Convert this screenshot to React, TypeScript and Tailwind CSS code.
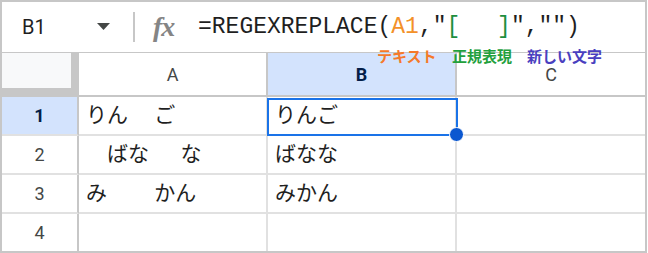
const cellFont = "font-['Roboto','Noto_Sans_CJK_JP',sans-serif]";

const rows = [
  { n: "1", a: "りん　 ご", b: "りんご" },
  { n: "2", a: "　ばな　  な", b: "ばなな" },
  { n: "3", a: "み　　 かん", b: "みかん" },
  { n: "4", a: "", b: "" },
];

function FxIcon() {
  return (
    <span className="w-[28px] text-[28px] leading-none italic font-bold text-[#858585] font-['Liberation_Serif',serif] tracking-[-1px]">
      fx
    </span>
  );
}

export default function App() {
  return (
    <div className="w-[648px] h-[253px] bg-white font-['Roboto',sans-serif]">
      <div className="relative w-[647px] h-[253px] border-2 border-[#c7c7c7] overflow-hidden">
        {/* formula bar */}
        <div className="flex items-center h-[51px] border-b border-[#c7c7c7]">
          <span className="ml-[20px] w-[75px] text-[20px] text-[#1f1f1f]">B1</span>
          <svg width="13" height="7" viewBox="0 0 13 7" className="mt-[-2px]">
            <polygon points="0,0 13,0 6.5,7" fill="#444746" />
          </svg>
          <div className="ml-[23px] w-[2px] h-[30px] bg-[#c7c7c7]" />
          <div className="ml-[18px] flex items-center">
            <FxIcon />
          </div>
          <div className="ml-[17px] whitespace-pre text-[23px] text-[#1f1f1f] font-['Liberation_Mono','Noto_Sans_CJK_JP',monospace]">
            =REGEXREPLACE(<span className="text-[#f39129]">A1</span>,"
            <span className="text-[#1e8e3e]">[</span> 　<span className="text-[#1e8e3e]">]</span>","")
          </div>
        </div>

        {/* sheet grid */}
        <div className="grid grid-cols-[77px_189px_189px_188px] grid-rows-[44px_39px_39px_39px_39px] text-[#444746]">
          <div className="bg-[#c7c7c7]">
            <div className="w-[69px] h-[35px] bg-[#f8f9fa]" />
          </div>
          <div className="flex items-center justify-center border-r-2 border-b-2 border-[#c7c7c7] text-[18px]">A</div>
          <div className="flex items-center justify-center border-r-2 border-b-2 border-[#c7c7c7] bg-[#d3e3fd] text-[18px] font-bold text-[#041e49]">
            B
          </div>
          <div className="flex items-center justify-center border-b-2 border-[#c7c7c7] text-[18px]">C</div>

          {rows.map((r) => (
            <>
              <div
                key={r.n + "h"}
                className={`flex items-center justify-center border-r-2 border-r-[#c7c7c7] border-b-2 border-b-[#e1e1e1] text-[18px] ${
                  r.n === "1" ? "bg-[#d3e3fd] font-bold text-[#041e49]" : ""
                }`}
              >
                {r.n}
              </div>
              <div
                key={r.n + "a"}
                className={`flex items-center pl-[7px] border-r-2 border-b-2 border-[#e1e1e1] whitespace-pre text-[21px] text-[#1f1f1f] ${cellFont}`}
              >
                {r.a}
              </div>
              <div
                key={r.n + "b"}
                className={`flex items-center pl-[7px] border-r-2 border-b-2 border-[#e1e1e1] whitespace-pre text-[21px] text-[#1f1f1f] ${cellFont}`}
              >
                {r.b}
              </div>
              <div key={r.n + "c"} className="border-b-2 border-[#e1e1e1]" />
            </>
          ))}
        </div>

        {/* selection on B1 */}
        <div className="absolute left-[265px] top-[96px] w-[191px] h-[38px] border-2 border-[#1a73e8]" />
        <div className="absolute left-[447px] top-[125px] w-[15px] h-[15px] rounded-full bg-[#0b57d0] border border-white" />

        {/* annotations */}
        <div className="absolute left-[375px] top-[46px] text-[15px] leading-none font-bold text-[#f5792a] font-['Noto_Sans_CJK_JP',sans-serif]">
          テキスト
        </div>
        <div className="absolute left-[450px] top-[46px] text-[15px] leading-none font-bold text-[#22a03c] font-['Noto_Sans_CJK_JP',sans-serif]">
          正規表現
        </div>
        <div className="absolute left-[525px] top-[46px] text-[15px] leading-none font-bold text-[#4a3fbf] font-['Noto_Sans_CJK_JP',sans-serif]">
          新しい文字
        </div>
      </div>
    </div>
  );
}
